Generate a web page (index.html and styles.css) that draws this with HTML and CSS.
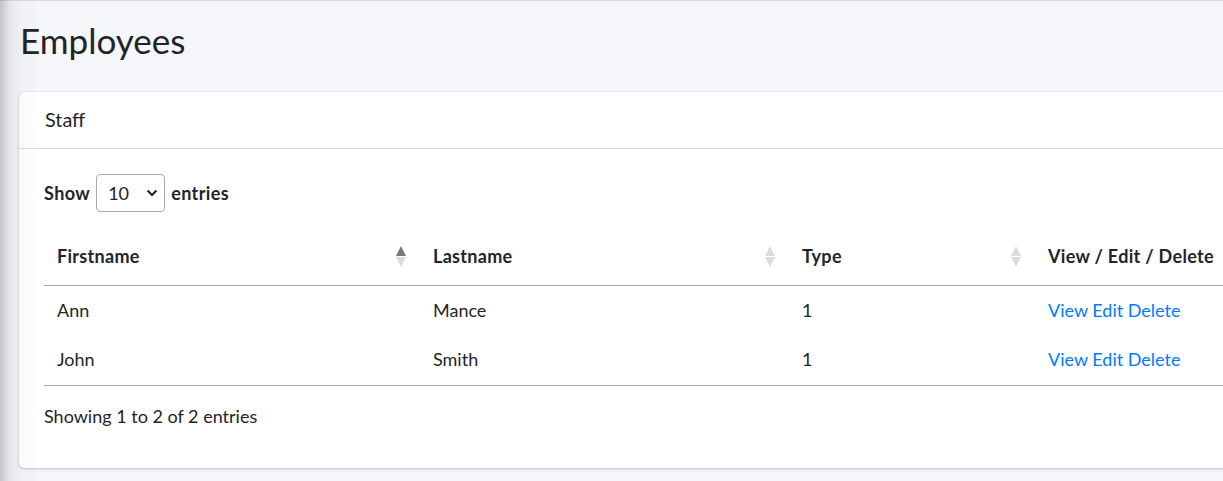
FILE: index.html
```html
<!DOCTYPE html>
<html lang="en">
<head>
    <meta charset="UTF-8">
    <meta name="viewport" content="width=device-width, initial-scale=1.0">
    <title>Employees</title>
    <link rel="stylesheet" href="styles.css">
</head>
    <body>
        <div class="content-wrapper">
        <h1 class="page-title">Employees</h1>
        <div class="card">
            <div class="card-header">Staff</div>
            <div class="card-body">
                <div class="length-row">
                    <label>Show</label>
                    <select class="length-select">
                        <option>10</option>
                        <option>25</option>
                        <option>50</option>
                        <option>100</option>
                    </select>
                    <label>entries</label>
                </div>
                <table class="staff-table">
                    <thead>
                        <tr>
                            <th class="col-first"><div class="th-inner">Firstname <span class="sort sort-asc"><i class="up"></i><i class="down"></i></span></div></th>
                            <th class="col-last"><div class="th-inner">Lastname <span class="sort"><i class="up"></i><i class="down"></i></span></div></th>
                            <th class="col-type"><div class="th-inner">Type <span class="sort"><i class="up"></i><i class="down"></i></span></div></th>
                            <th class="col-actions"><div class="th-inner">View / Edit / Delete</div></th>
                        </tr>
                    </thead>
                    <tbody>
                        <tr>
                            <td>Ann</td>
                            <td>Mance</td>
                            <td>1</td>
                            <td><a href="#">View</a> <a href="#">Edit</a> <a href="#">Delete</a></td>
                        </tr>
                        <tr>
                            <td>John</td>
                            <td>Smith</td>
                            <td>1</td>
                            <td><a href="#">View</a> <a href="#">Edit</a> <a href="#">Delete</a></td>
                        </tr>
                    </tbody>
                </table>
                <div class="table-info">Showing 1 to 2 of 2 entries</div>
            </div>
        </div>
        </div>
    </body>
</html>
```

FILE: styles.css
```css
html, body {
    margin: 0;
    height: 100%;
}

body {
    font-family: Lato, "Open Sans", Arial, sans-serif;
    font-size: 18px;
    line-height: 1.5;
    color: #212529;
    background: #f4f6f9;
    overflow: hidden;
    border-top: 1px solid #dcdee2;
    box-sizing: border-box;
}

/* тень от боковой панели слева */
body::before {
    content: "";
    position: fixed;
    top: 0;
    left: 0;
    bottom: 0;
    width: 40px;
    background: linear-gradient(to right, rgba(0, 0, 0, 0.2) 0, rgba(0, 0, 0, 0.06) 10px, rgba(0, 0, 0, 0.02) 22px, rgba(0, 0, 0, 0) 40px);
    pointer-events: none;
}

.content-wrapper {
    width: 1300px;
    padding: 0 0 0 19px;
}

.page-title {
    margin: 0;
    height: 91px;
    padding: 17px 0 0 1px;
    box-sizing: border-box;
    font-size: 35px;
    font-weight: 400;
    line-height: 44px;
}

.card {
    background: #fff;
    border-radius: 5px;
    box-shadow: 0 0 1px rgba(0, 0, 0, 0.2), 0 1px 3px rgba(0, 0, 0, 0.2);
    width: 1271px;
}

.card-header {
    height: 56px;
    display: flex;
    align-items: center;
    padding: 0 26px;
    font-size: 19.8px;
    border-bottom: 1px solid rgba(0, 0, 0, 0.125);
}

.card-body {
    padding: 25px 25px 38px 25px;
}

.length-row {
    display: flex;
    align-items: center;
    height: 38px;
    font-weight: 700;
    letter-spacing: 0.4px;
}

.length-select {
    appearance: none;
    -webkit-appearance: none;
    width: 69px;
    height: 38px;
    margin: 0 6px 0 6px;
    padding: 0 0 0 11px;
    font-family: inherit;
    font-size: 18px;
    color: #212529;
    border: 1px solid #aaa;
    border-radius: 4px;
    background: #fff url("data:image/svg+xml,%3Csvg xmlns='http://www.w3.org/2000/svg' width='12' height='8' viewBox='0 0 12 8'%3E%3Cpath d='M1.5 1.5 6 6l4.5-4.5' fill='none' stroke='%23222' stroke-width='2.2'/%3E%3C/svg%3E") no-repeat right 6px center;
}

.staff-table {
    margin-top: 17px;
    border-collapse: collapse;
    table-layout: fixed;
    width: 1221px;
    border-bottom: 1px solid #aaa;
}

.col-first { width: 376px; }
.col-last { width: 369px; }
.col-type { width: 246px; }

.staff-table th {
    height: 56px;
    padding: 0 14px 0 13px;
    text-align: left;
    font-weight: 700;
    letter-spacing: 0.3px;
    border-bottom: 1px solid #aaa;
    box-sizing: border-box;
}

.th-inner {
    display: flex;
    align-items: center;
    justify-content: space-between;
}

.staff-table td {
    height: 50px;
    padding: 0 13px;
    box-sizing: border-box;
}

.staff-table a {
    color: #007bff;
    text-decoration: none;
}

/* стрелки сортировки */
.sort {
    display: flex;
    flex-direction: column;
    gap: 1px;
}

.sort i {
    display: block;
    width: 0;
    height: 0;
    border-left: 5.5px solid transparent;
    border-right: 5.5px solid transparent;
}

.sort .up {
    border-bottom: 10px solid #dcdcdc;
}

.sort .down {
    border-top: 10px solid #dcdcdc;
}

.sort-asc .up {
    border-bottom-color: #777;
}

.table-info {
    margin-top: 17px;
}
```
